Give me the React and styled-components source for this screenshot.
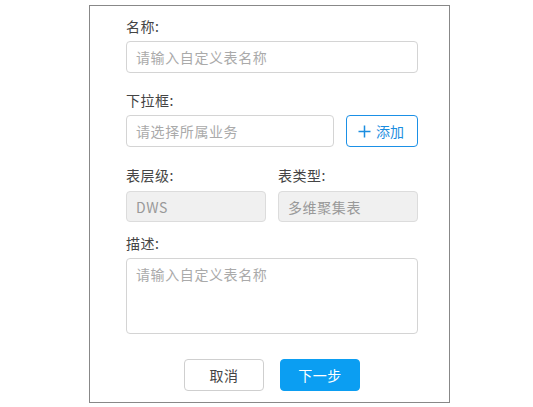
import React from "react";
import styled, { createGlobalStyle } from "styled-components";

const Global = createGlobalStyle`
  html, body { margin: 0; padding: 0; background: #fff; }
  body { font-family: "Noto Sans CJK SC", "Noto Sans", sans-serif; }
  * { box-sizing: border-box; }
`;

const Panel = styled.div`
  margin: 5px 0 0 89px;
  width: 361px;
  height: 398px;
  border: 1px solid #888;
  padding: 10px 0 0 36px;
`;

const Form = styled.div`
  width: 292px;
  display: flex;
  flex-direction: column;
`;

const Field = styled.div`
  display: flex;
  flex-direction: column;
  gap: ${(p) => p.$gap || 5}px;
  margin-bottom: ${(p) => p.$mb || 0}px;
`;

const Label = styled.div`
  font-size: 14px;
  line-height: 20px;
  height: 20px;
  color: #444;
  letter-spacing: 0.5px;
`;

const Input = styled.input`
  width: 100%;
  height: ${(p) => p.$h || 32}px;
  border: 1px solid ${(p) => (p.disabled ? "#dcdcdc" : "#d4d4d4")};
  border-radius: 4px;
  background: ${(p) => (p.disabled ? "#f0f0f0" : "#fff")};
  padding: 0 9px;
  font-family: inherit;
  font-size: 14px;
  letter-spacing: 0.6px;
  color: #999;
  outline: none;
  &::placeholder { color: #aaa; }
`;

const TextArea = styled.textarea`
  width: 100%;
  height: 76px;
  border: 1px solid #d4d4d4;
  border-radius: 4px;
  padding: 4px 9px;
  font-family: inherit;
  font-size: 14px;
  letter-spacing: 0.6px;
  line-height: 22px;
  resize: none;
  outline: none;
  &::placeholder { color: #aaa; }
`;

const Row = styled.div`
  display: flex;
  gap: 12px;
`;

const Cols = styled.div`
  display: grid;
  grid-template-columns: 1fr 1fr;
  column-gap: 12px;
  margin-bottom: 11px;
`;

const AddButton = styled.button`
  flex: 0 0 72px;
  height: 32px;
  border: 1px solid #1b90e6;
  border-radius: 4px;
  background: #fff;
  color: #1b8de0;
  font-family: inherit;
  font-size: 14px;
  display: flex;
  align-items: center;
  justify-content: center;
  gap: 5px;
  padding: 0 2px 0 0;
`;

const Footer = styled.div`
  display: flex;
  justify-content: center;
  gap: 16px;
  margin-top: 25px;
`;

const Button = styled.button`
  width: 80px;
  height: 32px;
  border-radius: 4px;
  font-family: inherit;
  font-size: 14px;
  letter-spacing: 0.5px;
  padding: 0;
  border: 1px solid ${(p) => (p.$primary ? "#0b9ef2" : "#cfcfcf")};
  background: ${(p) => (p.$primary ? "#0b9ef2" : "#fff")};
  color: ${(p) => (p.$primary ? "#fff" : "#444")};
`;

const Plus = () => (
  <svg width="13" height="13" viewBox="0 0 13 13">
    <path d="M6.5 0.5v12M0.5 6.5h12" stroke="currentColor" strokeWidth="1.5" fill="none" />
  </svg>
);

export default function App() {
  return (
    <>
      <Global />
      <Panel>
        <Form>
          <Field $mb={17}>
            <Label>名称:</Label>
            <Input placeholder="请输入自定义表名称" />
          </Field>
          <Field $mb={18}>
            <Label>下拉框:</Label>
            <Row>
              <Input placeholder="请选择所属业务" />
              <AddButton>
                <Plus />
                添加
              </AddButton>
            </Row>
          </Field>
          <Cols>
            <Field $gap={6}>
              <Label>表层级:</Label>
              <Input disabled value="DWS" $h={31} readOnly />
            </Field>
            <Field $gap={6}>
              <Label>表类型:</Label>
              <Input disabled value="多维聚集表" $h={31} readOnly />
            </Field>
          </Cols>
          <Field>
            <Label>描述:</Label>
            <TextArea placeholder="请输入自定义表名称" />
          </Field>
          <Footer>
            <Button>取消</Button>
            <Button $primary>下一步</Button>
          </Footer>
        </Form>
      </Panel>
    </>
  );
}
